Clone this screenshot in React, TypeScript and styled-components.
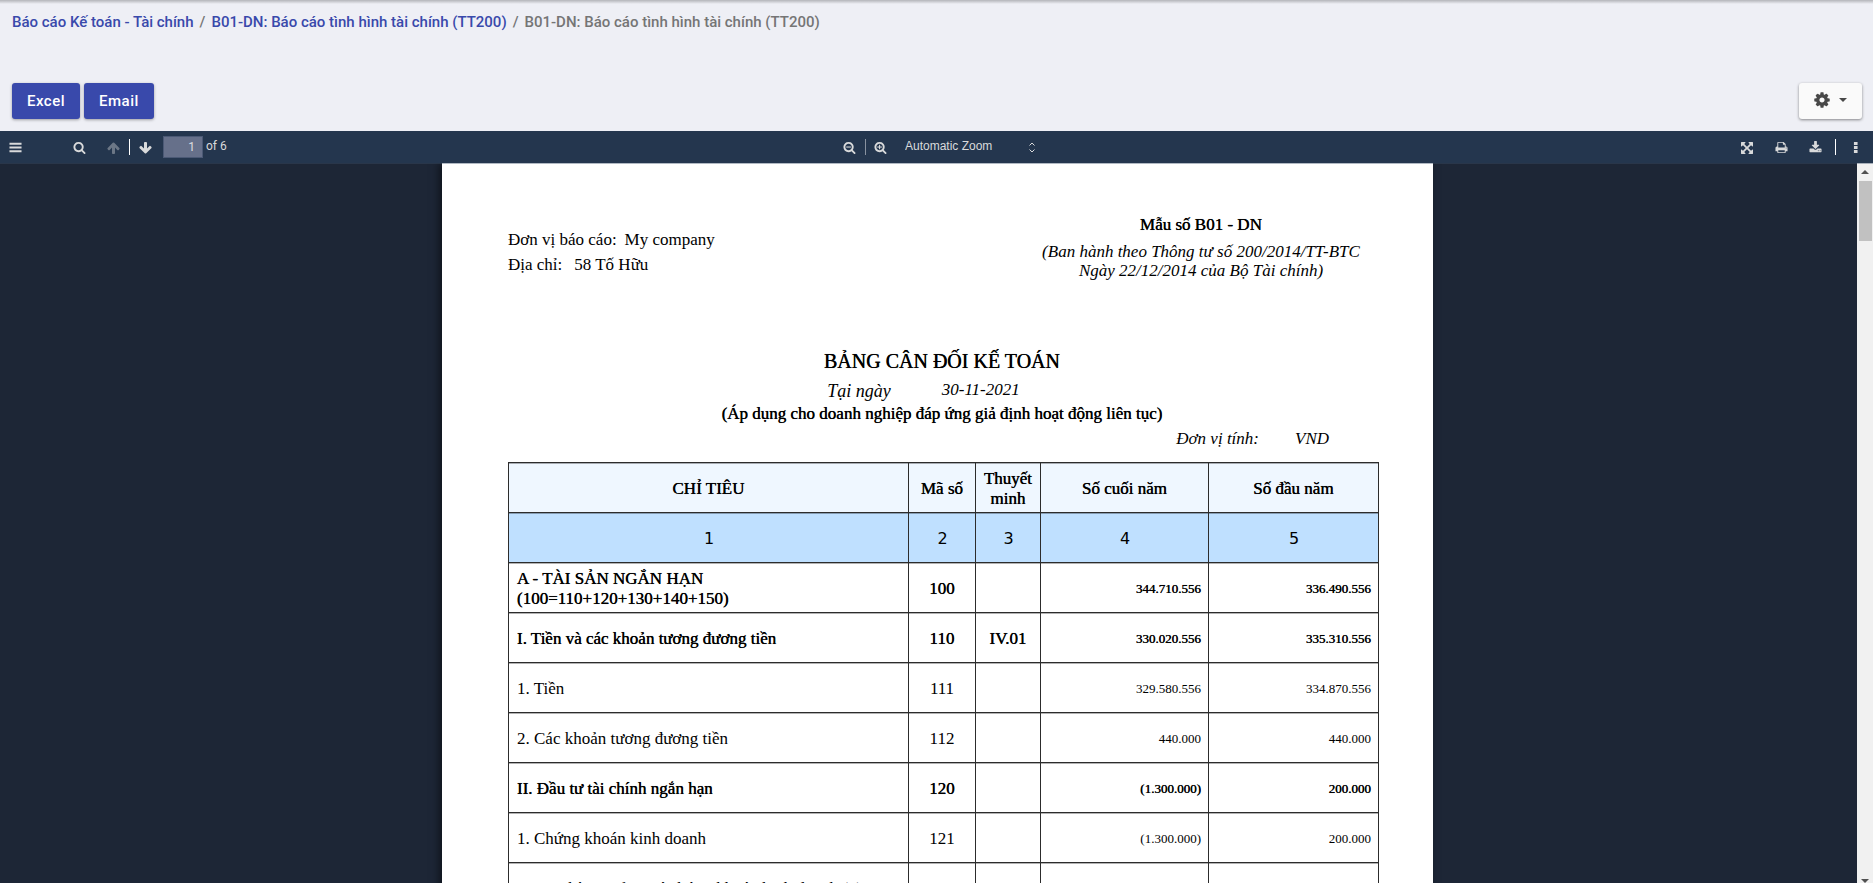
import React from "react";
import styled, { createGlobalStyle, css } from "styled-components";

const GlobalStyle = createGlobalStyle`
  *, *::before, *::after { box-sizing: border-box; }
  html, body { margin: 0; height: 100%; overflow: hidden; }
  body { background: #eeeff5; font-family: Roboto, sans-serif; }
`;

/* ---------- icons ---------- */

const paths = {
  bars: "M64 256h1664v256h-1664zM64 768h1664v256h-1664zM64 1280h1664v256h-1664z",
  search:
    "M1216 832q0-185-131.5-316.5t-316.5-131.5-316.5 131.5-131.5 316.5 131.5 316.5 316.5 131.5 316.5-131.5 131.5-316.5zm512 832q0 52-38 90t-90 38q-54 0-90-38l-343-342q-179 124-399 124-143 0-273.5-55.5t-225-150-150-225-55.5-273.5 55.5-273.5 150-225 225-150 273.5-55.5 273.5 55.5 225 150 150 225 55.5 273.5q0 220-124 399l343 343q37 37 37 90z",
  arrowUp:
    "M1611 971q0 51-37 90l-75 75q-38 38-91 38-54 0-90-38l-294-293v704q0 52-37.5 84.5t-90.5 32.5h-128q-53 0-90.5-32.5t-37.5-84.5v-704l-294 293q-36 38-90 38t-90-38l-75-75q-38-38-38-90 0-53 38-91l651-651q35-37 90-37 54 0 91 37l651 651q37 39 37 91z",
  expand:
    "M1411 541l-355 355 355 355 144-144q29-31 70-14 39 17 39 59v448q0 26-19 45t-45 19h-448q-42 0-59-40-17-39 14-69l144-144-355-355-355 355 144 144q31 30 14 69-17 40-59 40h-448q-26 0-45-19t-19-45v-448q0-42 40-59 39-17 69 14l144 144 355-355-355-355-144 144q-19 19-45 19-12 0-24-5-40-17-40-59v-448q0-26 19-45t45-19h448q42 0 59 40 17 39-14 69l-144 144 355 355 355-355-144-144q-31-30-14-69 17-40 59-40h448q26 0 45 19t19 45v448q0 42-39 59-13 5-25 5-26 0-45-19z",
  print:
    "M448 1536h896v-256h-896v256zm0-640h896v-384h-160q-40 0-68-28t-28-68v-160h-640v640zm1152 64q0-26-19-45t-45-19-45 19-19 45 19 45 45 19 45-19 19-45zm128 0v416q0 13-9.5 22.5t-22.5 9.5h-224v160q0 40-28 68t-68 28h-960q-40 0-68-28t-28-68v-160h-224q-13 0-22.5-9.5t-9.5-22.5v-416q0-79 56.5-135.5t135.5-56.5h64v-544q0-40 28-68t68-28h672q40 0 88 20t76 48l152 152q28 28 48 76t20 88v256h64q79 0 135.5 56.5t56.5 135.5z",
  download:
    "M1344 1344q0-26-19-45t-45-19-45 19-19 45 19 45 45 19 45-19 19-45zm256 0q0-26-19-45t-45-19-45 19-19 45 19 45 45 19 45-19 19-45zm128-224v320q0 40-28 68t-68 28h-1472q-40 0-68-28t-28-68v-320q0-40 28-68t68-28h465l135 136q58 56 136 56t136-56l136-136h464q40 0 68 28t28 68zm-325-569q17 41-14 70l-448 448q-18 19-45 19t-45-19l-448-448q-31-29-14-70 17-39 59-39h256v-448q0-26 19-45t45-19h256q26 0 45 19t19 45v448h256q42 0 59 39z",
  more: "M680 128h500v420h-500zM680 686h500v420h-500zM680 1244h500v420h-500z",
  cog: "M1152 896q0-106-75-181t-181-75-181 75-75 181 75 181 181 75 181-75 75-181zm512-109v222q0 12-8 23t-20 13l-185 28q-19 54-39 91 35 50 107 138 10 12 10 25t-9 23q-27 37-99 108t-94 71q-12 0-26-9l-138-108q-44 23-91 38-16 136-29 186-7 28-36 28h-222q-14 0-24.5-8.5t-11.5-21.5l-28-184q-49-16-90-37l-141 107q-10 9-25 9-14 0-25-11-126-114-165-168-7-10-7-23 0-12 8-23 15-21 51-66.5t54-70.5q-27-50-41-99l-183-27q-13-2-21-12.5t-8-23.5v-222q0-12 8-23t19-13l186-28q14-46 39-92-40-57-107-138-10-12-10-24 0-10 9-23 26-36 98.5-107.5t94.5-71.5q13 0 26 10l138 107q44-23 91-38 16-136 29-186 7-28 36-28h222q14 0 24.5 8.5t11.5 21.5l28 184q49 16 90 37l142-107q9-9 24-9 13 0 25 10 129 119 165 170 7 8 7 22 0 12-8 23-15 21-51 66.5t-54 70.5q26 50 41 98l183 28q13 2 21 12.5t8 23.5z",
};

const Svg = styled.svg<{ $size: number }>`
  display: block;
  flex: none;
  width: ${(p) => p.$size}px;
  height: ${(p) => p.$size}px;
  fill: currentColor;
`;

type IconName = keyof typeof paths | "arrowDown" | "zoomOut" | "zoomIn";

function Icon({ name, size = 13 }: { name: IconName; size?: number }) {
  if (name === "arrowDown") {
    return (
      <Svg $size={size} viewBox="0 0 1792 1792" aria-hidden="true">
        <path d={paths.arrowUp} transform="rotate(180 896 896)" />
      </Svg>
    );
  }
  if (name === "zoomOut" || name === "zoomIn") {
    return (
      <Svg $size={size} viewBox="0 0 1792 1792" aria-hidden="true">
        <path d={paths.search} />
        <path d="M448 758h640v148h-640z" />
        {name === "zoomIn" && <path d="M694 512h148v640h-148z" />}
      </Svg>
    );
  }
  return (
    <Svg $size={size} viewBox="0 0 1792 1792" aria-hidden="true">
      <path d={paths[name]} />
    </Svg>
  );
}

/* ---------- page header ---------- */

const Shell = styled.div`
  display: flex;
  flex-direction: column;
  height: 100vh;
  overflow: hidden;
`;

const Header = styled.header`
  flex: none;
  padding: 0 11px 12px 12px;
  background: linear-gradient(#b4b5ba, #c2c3c8 1px, #eeeff5 4px);
`;

const Breadcrumb = styled.nav`
  display: flex;
  gap: 6px;
  padding-top: 12px;
  margin-bottom: 51px;
  font-size: 15px;
  font-weight: 500;
  line-height: 20px;
  color: #757575;
`;

const CrumbLink = styled.a`
  color: #3949ab;
  text-decoration: none;
`;

const Actions = styled.div`
  display: flex;
  gap: 4px;
`;

const ActionButton = styled.button`
  height: 36px;
  padding: 0 15px;
  border: 0;
  border-radius: 3px;
  background: #3949ab;
  color: #fff;
  font: 500 15px Roboto, sans-serif;
  letter-spacing: 0.5px;
  box-shadow: 0 1px 3px rgba(0, 0, 0, 0.35);
`;

const SettingsButton = styled.button`
  display: flex;
  align-items: center;
  justify-content: center;
  gap: 8px;
  width: 63px;
  height: 36px;
  margin-left: auto;
  padding: 0 2px 3px 0;
  border: 0;
  border-radius: 3px;
  background: #fafafa;
  color: #484848;
  box-shadow: 0 1px 3px rgba(0, 0, 0, 0.45);
`;

const Caret = styled.span`
  border: 4px solid transparent;
  border-top-color: currentColor;
  border-bottom: 0;
`;

/* ---------- viewer toolbar ---------- */

const Toolbar = styled.div`
  position: relative;
  z-index: 1;
  flex: none;
  display: grid;
  grid-template-columns: 1fr auto 1fr;
  align-items: center;
  height: 32px;
  background: #24364e;
  color: #d9dadb;
  box-shadow: 0 1px 0 rgba(60, 80, 105, 0.4);
`;

const ToolGroup = styled.div<{ $place?: "center" | "end" }>`
  display: flex;
  align-items: center;
  height: 32px;
  ${(p) => p.$place === "end" && "justify-content: flex-end;"}
  ${(p) => p.$place === "center" && "padding-right: 4px;"}
`;

const ToolButton = styled.button<{ $width?: number; $indent?: number }>`
  display: flex;
  align-items: center;
  justify-content: center;
  width: ${(p) => p.$width ?? 31}px;
  height: 32px;
  padding: 1px 0 0 ${(p) => p.$indent ?? 0}px;
  border: 0;
  background: none;
  color: inherit;
  &:disabled {
    opacity: 0.4;
  }
`;

const Spacer = styled.div`
  width: 33px;
`;

const Divider = styled.span<{ $dim?: boolean; $gap?: number }>`
  width: 1px;
  height: 16px;
  margin-left: ${(p) => p.$gap ?? 0}px;
  background: ${(p) => (p.$dim ? "#8992a0" : "#fff")};
`;

const PageField = styled.input`
  width: 40px;
  height: 22px;
  margin: 0 3px 0 4px;
  padding: 0 7px 0 0;
  border: 1px solid #4b5975;
  background: #66708a;
  color: #dcdde0;
  font: 12px Roboto, sans-serif;
  text-align: right;
`;

const PageCount = styled.label`
  font-size: 12px;
  line-height: 16px;
  padding-bottom: 2px;
`;

const ZoomWrap = styled.div`
  display: flex;
  align-items: center;
  margin-left: 10px;
`;

const ZoomSelect = styled.select`
  appearance: none;
  width: 124px;
  padding: 0 0 2px;
  border: 0;
  background: none;
  color: #d9dadb;
  font: 12px "Liberation Sans", Arial, sans-serif;
`;

const ZoomCaret = styled.svg`
  width: 6px;
  height: 11px;
  fill: none;
  stroke: #d9dadb;
`;

/* ---------- viewer body ---------- */

const Viewer = styled.main`
  flex: 1;
  min-height: 0;
  display: flex;
  margin-bottom: -7px;
  background: #1d2636;
`;

const Canvas = styled.div`
  flex: 1;
  min-width: 0;
  padding-left: 18px;
  overflow: hidden;
`;

const Sheet = styled.article`
  max-width: 991px;
  margin: 0 auto;
  padding: 52px 54px 60px 66px;
  background: #fff;
  color: #000;
  font: 17px "Liberation Serif", "Times New Roman", serif;
  box-shadow: -3px 0 8px rgba(0, 0, 0, 0.5);
`;

const strong = css`
  font-weight: 400;
  text-shadow: 0 0 0 #000, 0 0 1px rgba(0, 0, 0, 0.3);
`;

const SheetTop = styled.div`
  display: flex;
  justify-content: space-between;
`;

const Company = styled.div`
  padding-top: 12px;
  line-height: 25px;
`;

const CompanyValue = styled.span<{ $far?: boolean }>`
  margin-left: ${(p) => (p.$far ? 12 : 8)}px;
`;

const FormInfo = styled.div`
  width: 356px;
  text-align: center;
  font-style: italic;
  line-height: 19px;
`;

const FormCode = styled.div`
  ${strong}
  font-style: normal;
  line-height: 20px;
  margin-bottom: 7px;
`;

const Title = styled.h1`
  ${strong}
  margin: 69px 0 6px;
  padding-right: 3px;
  font-size: 20px;
  line-height: 24px;
  text-align: center;
`;

const DateLine = styled.div`
  display: flex;
  justify-content: center;
  gap: 51px;
  padding-right: 40px;
  font-style: italic;
  line-height: 22px;
  height: 25px;
`;

const DateLabel = styled.span`
  font-size: 18px;
  line-height: 24px;
`;

const Subtitle = styled.div`
  ${strong}
  padding-right: 3px;
  line-height: 20px;
  text-align: center;
`;

const UnitLine = styled.div`
  display: flex;
  justify-content: flex-end;
  gap: 36px;
  padding-right: 50px;
  margin: 5px 0 13px;
  font-style: italic;
  line-height: 20px;
`;

const Table = styled.table`
  width: 100%;
  table-layout: fixed;
  border-collapse: collapse;
`;

const Col = styled.col<{ $w?: number }>`
  ${(p) => p.$w && `width: ${p.$w}px;`}
`;

const cell = css`
  height: 50px;
  padding: 2px 7px 0 8px;
  border: 1px solid #2c2c2c;
  line-height: 20px;
  box-shadow: inset 0 1px 0 rgba(0, 0, 0, 0.3);
`;

const HeadCell = styled.th`
  ${cell}
  ${strong}
  padding: 2px 0 0;
  background: #eff7ff;
`;

const IndexCell = styled.td`
  ${cell}
  background: #bfe0ff;
  font-family: "DejaVu Sans", sans-serif;
  font-size: 16px;
  text-align: center;
`;

const Cell = styled.td<{ $kind: "name" | "code" | "amount"; $strong?: boolean }>`
  ${cell}
  text-align: ${(p) => ({ name: "left", code: "center", amount: "right" })[p.$kind]};
  ${(p) => p.$kind === "amount" && "font-size: 13px;"}
  ${(p) => p.$kind === "code" && "padding: 2px 0 0;"}
  ${(p) => p.$strong && strong}
`;

/* ---------- scroll bar ---------- */

const ScrollTrack = styled.div`
  flex: none;
  display: flex;
  flex-direction: column;
  align-items: center;
  width: 16px;
  padding: 7px 0;
  background: #f1f1f1;
`;

const ScrollArrow = styled.span<{ $down?: boolean }>`
  border: 4px solid transparent;
  ${(p) =>
    p.$down
      ? "border-top-color: #505050; border-bottom: 0; margin-top: auto;"
      : "border-bottom-color: #505050; border-top: 0;"}
`;

const ScrollThumb = styled.span`
  width: 13px;
  height: 60px;
  margin-top: 7px;
  background: #c1c1c1;
`;

/* ---------- data ---------- */

interface Row {
  name: React.ReactNode;
  code: string;
  note?: string;
  end: string;
  start: string;
  strong?: boolean;
}

const rows: Row[] = [
  {
    name: (
      <>
        A - TÀI SẢN NGẮN HẠN
        <br />
        (100=110+120+130+140+150)
      </>
    ),
    code: "100",
    end: "344.710.556",
    start: "336.490.556",
    strong: true,
  },
  { name: "I. Tiền và các khoản tương đương tiền", code: "110", note: "IV.01", end: "330.020.556", start: "335.310.556", strong: true },
  { name: "1. Tiền", code: "111", end: "329.580.556", start: "334.870.556" },
  { name: "2. Các khoản tương đương tiền", code: "112", end: "440.000", start: "440.000" },
  { name: "II. Đầu tư tài chính ngắn hạn", code: "120", end: "(1.300.000)", start: "200.000", strong: true },
  { name: "1. Chứng khoán kinh doanh", code: "121", end: "(1.300.000)", start: "200.000" },
  { name: "2. Dự phòng giảm giá chứng khoán kinh doanh (*)", code: "122", end: "", start: "" },
];

export default function App() {
  return (
    <Shell>
      <GlobalStyle />
      <Header>
        <Breadcrumb aria-label="Breadcrumb">
          <CrumbLink href="#reports">Báo cáo Kế toán - Tài chính</CrumbLink>
          <span>/</span>
          <CrumbLink href="#b01">B01-DN: Báo cáo tình hình tài chính (TT200)</CrumbLink>
          <span>/</span>
          <span>B01-DN: Báo cáo tình hình tài chính (TT200)</span>
        </Breadcrumb>
        <Actions>
          <ActionButton>Excel</ActionButton>
          <ActionButton>Email</ActionButton>
          <SettingsButton aria-label="Settings">
            <Icon name="cog" size={18} />
            <Caret />
          </SettingsButton>
        </Actions>
      </Header>

      <Toolbar>
        <ToolGroup>
          <ToolButton aria-label="Toggle sidebar">
            <Icon name="bars" />
          </ToolButton>
          <Spacer />
          <ToolButton aria-label="Find">
            <Icon name="search" />
          </ToolButton>
          <ToolButton aria-label="Previous page" $width={34} $indent={4} disabled>
            <Icon name="arrowUp" size={14} />
          </ToolButton>
          <Divider />
          <ToolButton aria-label="Next page" $width={29}>
            <Icon name="arrowDown" size={14} />
          </ToolButton>
          <PageField id="page-number" defaultValue="1" />
          <PageCount htmlFor="page-number">of 6</PageCount>
        </ToolGroup>
        <ToolGroup $place="center">
          <ToolButton aria-label="Zoom out">
            <Icon name="zoomOut" />
          </ToolButton>
          <Divider $dim />
          <ToolButton aria-label="Zoom in" $width={29}>
            <Icon name="zoomIn" />
          </ToolButton>
          <ZoomWrap>
            <ZoomSelect aria-label="Zoom">
              <option>Automatic Zoom</option>
            </ZoomSelect>
            <ZoomCaret viewBox="0 0 6 11" aria-hidden="true">
              <path d="M0.5 3.5L3 1L5.5 3.5M0.5 7.5L3 10L5.5 7.5" />
            </ZoomCaret>
          </ZoomWrap>
        </ToolGroup>
        <ToolGroup $place="end">
          <ToolButton aria-label="Presentation mode" $width={34}>
            <Icon name="expand" size={14} />
          </ToolButton>
          <ToolButton aria-label="Print" $width={34}>
            <Icon name="print" />
          </ToolButton>
          <ToolButton aria-label="Download" $width={34}>
            <Icon name="download" />
          </ToolButton>
          <Divider $gap={3} />
          <ToolButton aria-label="Tools" $width={37} $indent={2}>
            <Icon name="more" />
          </ToolButton>
        </ToolGroup>
      </Toolbar>

      <Viewer>
        <Canvas>
          <Sheet>
            <SheetTop>
              <Company>
                <div>
                  Đơn vị báo cáo:<CompanyValue>My company</CompanyValue>
                </div>
                <div>
                  Địa chỉ:<CompanyValue $far>58 Tố Hữu</CompanyValue>
                </div>
              </Company>
              <FormInfo>
                <FormCode>Mẫu số B01 - DN</FormCode>
                (Ban hành theo Thông tư số 200/2014/TT-BTC
                <br />
                Ngày 22/12/2014 của Bộ Tài chính)
              </FormInfo>
            </SheetTop>
            <Title>BẢNG CÂN ĐỐI KẾ TOÁN</Title>
            <DateLine>
              <DateLabel>Tại ngày</DateLabel>
              <span>30-11-2021</span>
            </DateLine>
            <Subtitle>(Áp dụng cho doanh nghiệp đáp ứng giả định hoạt động liên tục)</Subtitle>
            <UnitLine>
              <span>Đơn vị tính:</span>
              <span>VND</span>
            </UnitLine>
            <Table>
              <colgroup>
                <Col />
                <Col $w={67} />
                <Col $w={65} />
                <Col $w={168} />
                <Col $w={170} />
              </colgroup>
              <thead>
                <tr>
                  <HeadCell>CHỈ TIÊU</HeadCell>
                  <HeadCell>Mã số</HeadCell>
                  <HeadCell>Thuyết minh</HeadCell>
                  <HeadCell>Số cuối năm</HeadCell>
                  <HeadCell>Số đầu năm</HeadCell>
                </tr>
              </thead>
              <tbody>
                <tr>
                  {["1", "2", "3", "4", "5"].map((n) => (
                    <IndexCell key={n}>{n}</IndexCell>
                  ))}
                </tr>
                {rows.map((r) => (
                  <tr key={r.code}>
                    <Cell $kind="name" $strong={r.strong}>{r.name}</Cell>
                    <Cell $kind="code" $strong={r.strong}>{r.code}</Cell>
                    <Cell $kind="code" $strong={r.strong}>{r.note}</Cell>
                    <Cell $kind="amount" $strong={r.strong}>{r.end}</Cell>
                    <Cell $kind="amount" $strong={r.strong}>{r.start}</Cell>
                  </tr>
                ))}
              </tbody>
            </Table>
          </Sheet>
        </Canvas>
        <ScrollTrack aria-hidden="true">
          <ScrollArrow />
          <ScrollThumb />
          <ScrollArrow $down />
        </ScrollTrack>
      </Viewer>
    </Shell>
  );
}
